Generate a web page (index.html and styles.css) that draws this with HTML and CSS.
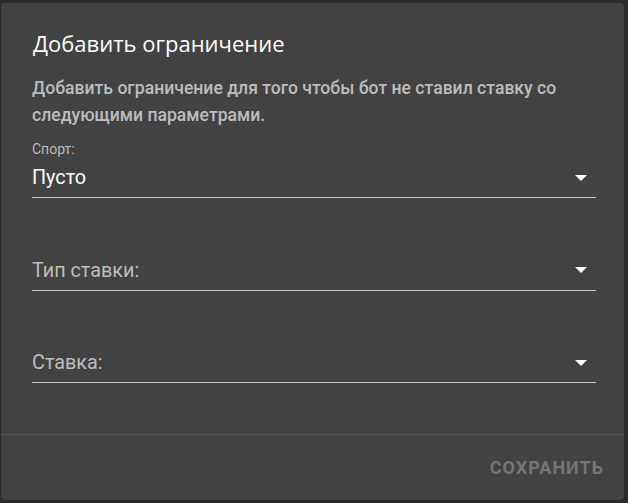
FILE: index.html
```html
<!DOCTYPE html>
<html lang="ru">
<head>
    <meta charset="UTF-8">
    <title>Добавить ограничение</title>
    <link rel="stylesheet" href="styles.css">
</head>
<body>
<div class="dialog">
    <div class="content">
        <h2 class="title">Добавить ограничение</h2>
        <p class="desc">Добавить ограничение для того чтобы бот не ставил ставку со следующими параметрами.</p>

        <div class="field">
            <label>Спорт:</label>
            <div class="select">
                <span class="value">Пусто</span>
                <svg class="arrow" width="12" height="6" viewBox="0 0 12 6"><path d="M0 0h12L6 6z" fill="#fff"/></svg>
            </div>
        </div>

        <div class="field">
            <div class="select">
                <span class="value empty">Тип ставки:</span>
                <svg class="arrow" width="12" height="6" viewBox="0 0 12 6"><path d="M0 0h12L6 6z" fill="#fff"/></svg>
            </div>
        </div>

        <div class="field">
            <div class="select">
                <span class="value empty">Ставка:</span>
                <svg class="arrow" width="12" height="6" viewBox="0 0 12 6"><path d="M0 0h12L6 6z" fill="#fff"/></svg>
            </div>
        </div>
    </div>
    <div class="actions">
        <button class="btn">Сохранить</button>
    </div>
</div>
</body>
</html>
```

FILE: styles.css
```css
* {
    padding: 0;
    margin: 0;
    box-sizing: border-box;
}

body {
    background: #2b2b2b;
    font-family: Roboto, "Noto Sans", sans-serif;
    width: 628px;
    height: 503px;
    overflow: hidden;
}

.dialog {
    width: 623px;
    height: 497px;
    margin: 3px 4px 3px 1px;
    background: #424242;
    border-radius: 4px;
    display: flex;
    flex-direction: column;
}

.content {
    padding: 25px 28px 0 30px;
    flex: 1;
}

.title {
    font-family: "Open Sans", Roboto, sans-serif;
    font-weight: 400;
    font-size: 22px;
    line-height: 30px;
    color: #fff;
    padding-left: 2px;
}

.desc {
    margin-top: 17px;
    font-size: 17.6px;
    line-height: 27px;
    font-weight: 500;
    color: #bdbdbd;
    padding-left: 1px;
    width: 565px;
}

.field {
    margin-top: 12px;
    padding-left: 1px;
}

.field + .field {
    margin-top: 52.5px;
}

.field label {
    display: block;
    font-size: 14px;
    line-height: 17px;
    color: #bdbdbd;
}

.select {
    display: flex;
    align-items: center;
    justify-content: space-between;
    height: 40px;
    border-bottom: 1px solid #c8c8c8;
    padding-right: 9px;
}

.value {
    font-size: 19.8px;
    color: #fff;
}

.value.empty {
    color: #bdbdbd;
}

.actions {
    border-top: 1px solid #555;
    height: 66px;
    display: flex;
    justify-content: flex-end;
    align-items: center;
    padding-right: 20px;
}

.btn {
    background: none;
    border: 0;
    font-family: Roboto, sans-serif;
    font-weight: 700;
    font-size: 18px;
    text-transform: uppercase;
    color: #757575;
    letter-spacing: 1px;
}
```
